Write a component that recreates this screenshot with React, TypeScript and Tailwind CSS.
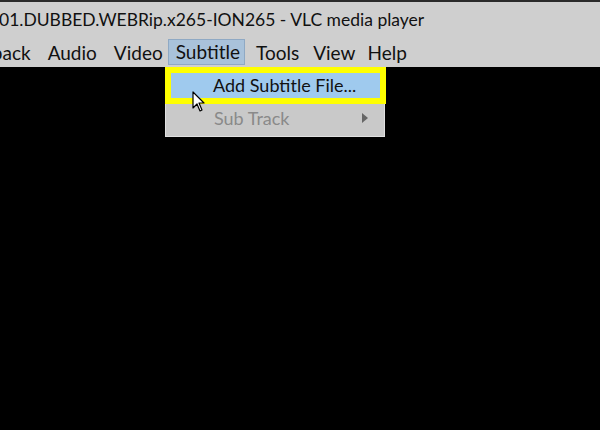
import React from "react";

export default function App() {
  const font = { fontFamily: 'Lato, "Open Sans", sans-serif' };
  return (
    <div className="relative w-[600px] h-[430px] bg-black overflow-hidden" style={font}>
      <div className="h-[2px] bg-[#2a2a2a]" />
      <div className="h-[34px] bg-[#cfcfcf] flex items-center pt-[2px]">
        <span className="-ml-[1px] text-[17.5px] text-[#111] whitespace-nowrap leading-none">
          01.DUBBED.WEBRip.x265-ION265 - VLC media player
        </span>
      </div>
      <div className="h-[31px] bg-[#cfcfcf] flex items-center text-[19px] text-[#111] whitespace-nowrap">
        <span className="-ml-[43px] pt-[3px]">Playback</span>
        <span className="ml-[17px] pt-[3px]">Audio</span>
        <span className="ml-[17px] pt-[3px]">Video</span>
        <span className="ml-[5px] pl-[7px] pr-[4px] h-[26px] flex items-center pt-[1px] bg-[#a9c2da] border border-[#8fa9c4]">Subtitle</span>
        <span className="ml-[11px] pt-[3px]">Tools</span>
        <span className="ml-[14px] pt-[3px]">View</span>
        <span className="ml-[12px] pt-[3px]">Help</span>
      </div>
      <div className="absolute left-[165px] top-[67px] w-[220px] h-[70px] bg-[#c9c9c9] border border-[#e0e0e0]">
        <div className="border-[6px] border-[#ffff00] -mt-[1px] -ml-[1px] w-[221px]">
          <div className="h-[25px] bg-[#9fcaee] flex items-center pl-[42px] text-[18px] text-[#111] whitespace-nowrap">
            Add Subtitle File...
          </div>
        </div>
        <div className="h-[28px] flex items-center pl-[48px] text-[18px] text-[#8a8a8a] relative">
          Sub Track
          <svg className="absolute left-[196px] top-[9px]" width="6" height="10" viewBox="0 0 6 10">
            <path d="M0 0 L6 5 L0 10 Z" fill="#666" />
          </svg>
        </div>
      </div>
      <svg className="absolute left-[192px] top-[91px]" width="14" height="22" viewBox="0 0 14 22">
        <path d="M1 1 L1 17 L5 13 L8 20 L10 19 L7 12 L12 12 Z" fill="#fff" stroke="#000" strokeWidth="1.2" strokeLinejoin="round" />
      </svg>
    </div>
  );
}
